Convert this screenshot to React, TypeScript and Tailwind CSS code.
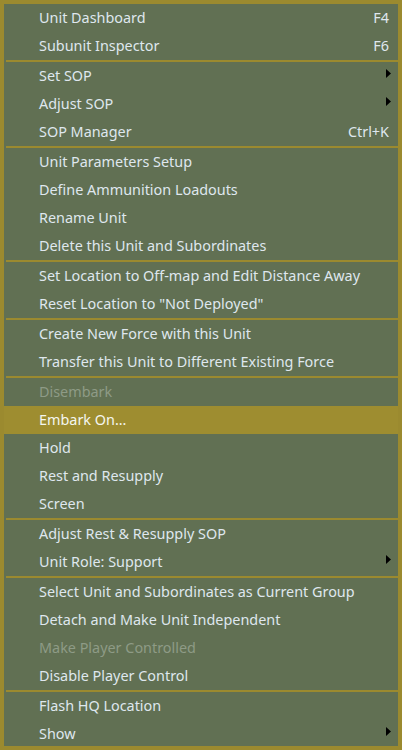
type Item = {
  label: string;
  shortcut?: string;
  submenu?: boolean;
  disabled?: boolean;
  active?: boolean;
};

const groups: Item[][] = [
  [
    { label: "Unit Dashboard", shortcut: "F4" },
    { label: "Subunit Inspector", shortcut: "F6" },
  ],
  [
    { label: "Set SOP", submenu: true },
    { label: "Adjust SOP", submenu: true },
    { label: "SOP Manager", shortcut: "Ctrl+K" },
  ],
  [
    { label: "Unit Parameters Setup" },
    { label: "Define Ammunition Loadouts" },
    { label: "Rename Unit" },
    { label: "Delete this Unit and Subordinates" },
  ],
  [
    { label: "Set Location to Off-map and Edit Distance Away" },
    { label: 'Reset Location to "Not Deployed"' },
  ],
  [
    { label: "Create New Force with this Unit" },
    { label: "Transfer this Unit to Different Existing Force" },
  ],
  [
    { label: "Disembark", disabled: true },
    { label: "Embark On...", active: true },
    { label: "Hold" },
    { label: "Rest and Resupply" },
    { label: "Screen" },
  ],
  [
    { label: "Adjust Rest & Resupply SOP" },
    { label: "Unit Role: Support", submenu: true },
  ],
  [
    { label: "Select Unit and Subordinates as Current Group" },
    { label: "Detach and Make Unit Independent" },
    { label: "Make Player Controlled", disabled: true },
    { label: "Disable Player Control" },
  ],
  [{ label: "Flash HQ Location" }, { label: "Show", submenu: true }],
];

function Row({ item }: { item: Item }) {
  return (
    <div
      className={
        item.active
          ? "flex h-7 items-center bg-[#9e8d30] -mx-1 pl-[39px] pr-[13px] text-[#f4f6f0]"
          : item.disabled
          ? "flex h-7 items-center pl-[35px] pr-[9px] text-[#8e9b86]"
          : "flex h-7 items-center pl-[35px] pr-[9px] text-[#dfe7ee]"
      }
    >
      <span className="flex-1 whitespace-nowrap">{item.label}</span>
      {item.shortcut && <span className="whitespace-nowrap">{item.shortcut}</span>}
      {item.submenu && (
        <svg width="5" height="9" viewBox="0 0 5 9" className="-mr-[2px] -mt-[6px]">
          <path d="M0 0 L5 4.5 L0 9 Z" fill="#000" />
        </svg>
      )}
    </div>
  );
}

export default function App() {
  return (
    <div
      className="h-[750px] w-[402px] overflow-hidden border-4 border-[#9b8a2f] bg-[#617053] text-[14.4px] leading-none"
      style={{ fontFamily: '"Noto Sans", "Open Sans", sans-serif' }}
    >
      {groups.map((group, gi) => (
        <div key={gi}>
          {gi > 0 && <div className="ml-[2px] h-[2px] bg-[#9b8a2f]" />}
          {group.map((item) => (
            <Row key={item.label} item={item} />
          ))}
        </div>
      ))}
    </div>
  );
}
